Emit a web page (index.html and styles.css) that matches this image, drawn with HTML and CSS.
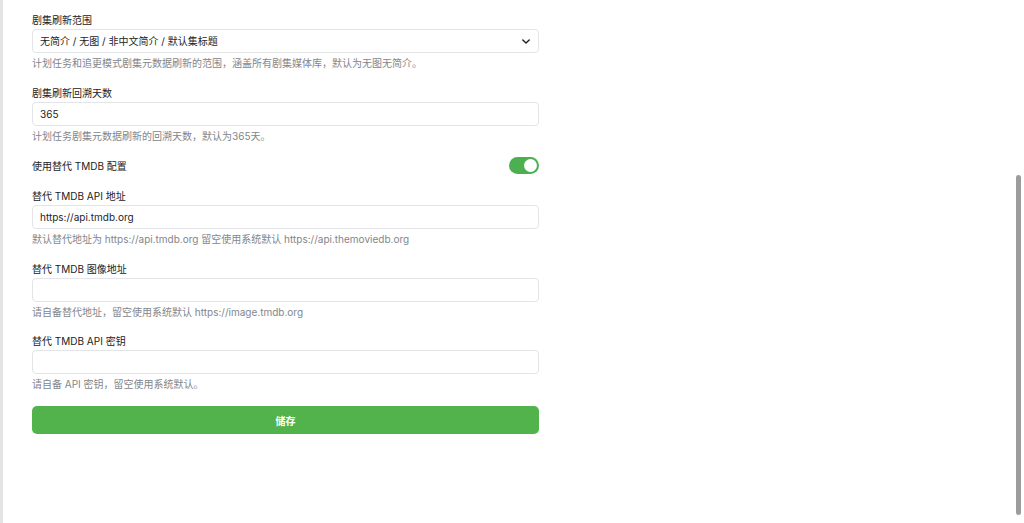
FILE: index.html
```html
<!DOCTYPE html>
<html lang="zh-CN">
	<head>
		<meta charset="UTF-8" />
		<meta name="viewport" content="width=device-width, initial-scale=1.0" />
		<title>剧集设置</title>
		<link rel="stylesheet" href="styles.css">
	</head>
	<body>
		<div class="page">
			<form class="settings" novalidate>
				<div class="field">
					<label for="range">剧集刷新范围</label>
					<div class="select-wrap">
						<select id="range" name="range">
							<option>无简介 / 无图 / 非中文简介 / 默认集标题</option>
						</select>
						<svg class="chevron" viewBox="0 0 10 6" width="8" height="5">
							<path d="M1 1l4 4 4-4" fill="none" stroke="#222" stroke-width="1.8" stroke-linecap="round" stroke-linejoin="round" />
						</svg>
					</div>
					<p class="hint">计划任务和追更模式剧集元数据刷新的范围，涵盖所有剧集媒体库，默认为无图无简介。</p>
				</div>

				<div class="field">
					<label for="days">剧集刷新回溯天数</label>
					<input type="text" id="days" name="days" value="365" />
					<p class="hint">计划任务剧集元数据刷新的回溯天数，默认为365天。</p>
				</div>

				<div class="field switch-row">
					<span class="switch-label">使用替代 TMDB 配置</span>
					<label class="switch">
						<input type="checkbox" checked />
						<span class="knob"></span>
					</label>
				</div>

				<div class="field">
					<label for="api">替代 TMDB API 地址</label>
					<input type="text" id="api" name="api" value="https://api.tmdb.org" />
					<p class="hint">默认替代地址为 https://api.tmdb.org 留空使用系统默认 https://api.themoviedb.org</p>
				</div>

				<div class="field">
					<label for="image">替代 TMDB 图像地址</label>
					<input type="text" id="image" name="image" />
					<p class="hint">请自备替代地址，留空使用系统默认 https://image.tmdb.org</p>
				</div>

				<div class="field">
					<label for="key">替代 TMDB API 密钥</label>
					<input type="text" id="key" name="key" />
					<p class="hint">请自备 API 密钥，留空使用系统默认。</p>
				</div>

				<button type="submit">储存</button>
			</form>
		</div>
		<div class="scrollbar"></div>
	</body>
</html>
```

FILE: styles.css
```css
* {
	margin: 0;
	padding: 0;
	box-sizing: border-box;
}

body {
	background-color: #fff;
	font-family: Inter, "Noto Sans CJK SC", sans-serif;
	font-size: 10px;
	color: #212529;
	height: 100vh;
	overflow: hidden;
}

.page {
	height: 100vh;
	border-left: 3px solid #e4e4e4;
	padding: 12px 0 0 29px;
}

.settings {
	width: 507px;
}

.field {
	margin-bottom: 13.7px;
}

.field > label,
.switch-label {
	display: block;
	line-height: 16px;
	font-weight: 400;
	color: #222;
}

input[type='text'],
select {
	appearance: none;
	display: block;
	width: 100%;
	height: 24px;
	margin-top: 1px;
	padding: 0 7px;
	border: 1px solid #e2e4e7;
	border-radius: 4px;
	background: #fff;
	font-family: inherit;
	font-size: 10px;
	color: #212529;
	outline: none;
}

.select-wrap {
	position: relative;
}

.chevron {
	position: absolute;
	right: 9px;
	top: 10px;
}

.hint {
	margin-top: 2px;
	line-height: 16px;
	color: #82868b;
}

.switch-row {
	display: flex;
	align-items: center;
	justify-content: space-between;
	height: 17px;
}

.switch {
	position: relative;
	width: 30px;
	height: 17px;
}

.switch input {
	display: none;
}

.knob {
	display: block;
	width: 30px;
	height: 17px;
	border-radius: 9px;
	background-color: #4caf50;
}

.knob::after {
	content: '';
	position: absolute;
	right: 2px;
	top: 2px;
	width: 13px;
	height: 13px;
	border-radius: 50%;
	background: #fff;
}

button {
	display: block;
	width: 100%;
	height: 28px;
	border: none;
	border-radius: 5px;
	background-color: #52b34c;
	color: #fff;
	font-family: inherit;
	font-size: 10px;
	font-weight: 700;
	cursor: pointer;
}

.scrollbar {
	position: absolute;
	left: 1016px;
	top: 175px;
	width: 5px;
	height: 340px;
	border-radius: 3px;
	background-color: #9c9c9c;
}
```
